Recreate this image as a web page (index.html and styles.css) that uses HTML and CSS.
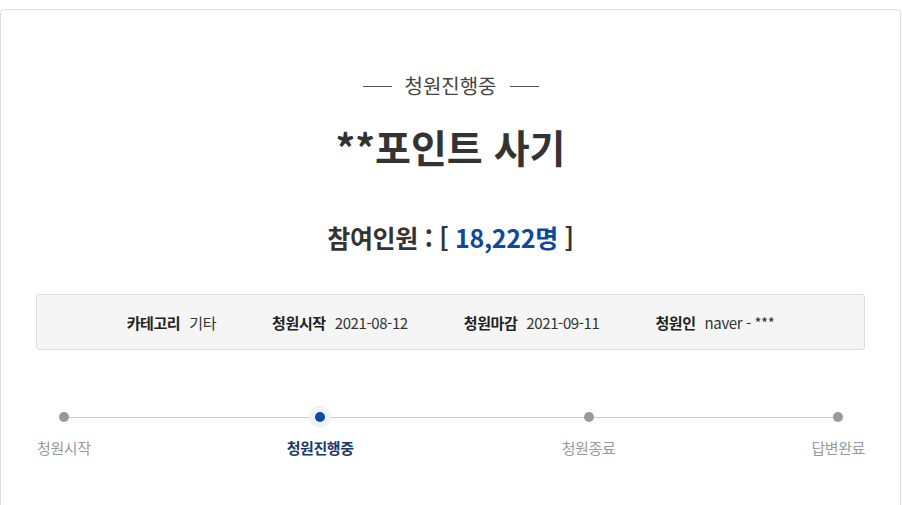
FILE: index.html
```html
<!DOCTYPE html>
<html lang="ko">
<head>
    <meta charset="UTF-8">
    <meta name="viewport" content="width=device-width, initial-scale=1.0">
    <title>청원 상세</title>
    <link rel="stylesheet" href="styles.css">
</head>

<body>
    <div class="petition">
        <div class="petition-status"><span>청원진행중</span></div>
        <h1 class="petition-title">**포인트 사기</h1>
        <h2 class="petition-count">참여인원 : [ <span class="count-num">18,222명</span> ]</h2>

        <ul class="petition-info">
            <li><strong>카테고리</strong>기타</li>
            <li><strong>청원시작</strong>2021-08-12</li>
            <li><strong>청원마감</strong>2021-09-11</li>
            <li><strong>청원인</strong>naver - ***</li>
        </ul>

        <ol class="petition-steps">
            <li>청원시작</li>
            <li class="active">청원진행중</li>
            <li>청원종료</li>
            <li>답변완료</li>
        </ol>
    </div>
</body>
</html>
```

FILE: styles.css
```css
* {
    box-sizing: border-box;
}

body {
    margin: 0;
    padding: 0;
    font-family: "Noto Sans CJK KR", "Noto Sans", sans-serif;
    color: #333;
    background-color: #fff;
}

.petition {
    margin: 9px 1px 0 0;
    height: 520px;
    padding: 0 35px;
    border: 1px solid #ddd;
    border-radius: 4px;
}

.petition-status {
    display: flex;
    justify-content: center;
    align-items: center;
    gap: 13px;
    margin-top: 63px;
    font-size: 20px;
    line-height: 26px;
    color: #444;
}

.petition-status::before,
.petition-status::after {
    content: "";
    width: 29px;
    height: 1px;
    background-color: #555;
}

.petition-title {
    margin: 22px 0 0;
    text-align: center;
    font-size: 39px;
    line-height: 50px;
    font-weight: bold;
    color: #333;
}

.petition-count {
    margin: 49px 0 0;
    text-align: center;
    font-size: 25px;
    line-height: 34px;
    font-weight: bold;
    color: #333;
    letter-spacing: -0.3px;
}

.count-num {
    color: #0d4a9b;
}

.petition-info {
    display: flex;
    justify-content: center;
    gap: 56px;
    list-style: none;
    margin: 40px 0 0;
    padding: 0;
    height: 56px;
    align-items: center;
    background-color: #f5f5f5;
    border: 1px solid #ddd;
    border-radius: 3px;
    font-size: 15px;
    color: #333;
    letter-spacing: -0.4px;
}

.petition-info strong {
    margin-right: 9px;
    color: #222;
}

.petition-steps {
    position: relative;
    display: flex;
    justify-content: space-between;
    list-style: none;
    margin: 56px 0 0 1px;
    padding: 0;
}

.petition-steps::before {
    content: "";
    position: absolute;
    left: 27px;
    right: 27px;
    top: 11px;
    height: 1px;
    background-color: #ccc;
}

.petition-steps li {
    position: relative;
    display: flex;
    flex-direction: column;
    align-items: center;
    font-size: 15px;
    line-height: 22px;
    color: #999;
    letter-spacing: -0.4px;
}

.petition-steps li::before {
    content: "";
    width: 10px;
    height: 10px;
    margin: 6px 0 15px;
    border-radius: 50%;
    background-color: #999;
}

.petition-steps li.active {
    color: #163a6e;
    font-weight: bold;
    margin-right: 12px;
}

.petition-steps li.active::before {
    background-color: #0d4a9b;
    box-shadow: 0 0 0 6px #eef4fb;
}
```
